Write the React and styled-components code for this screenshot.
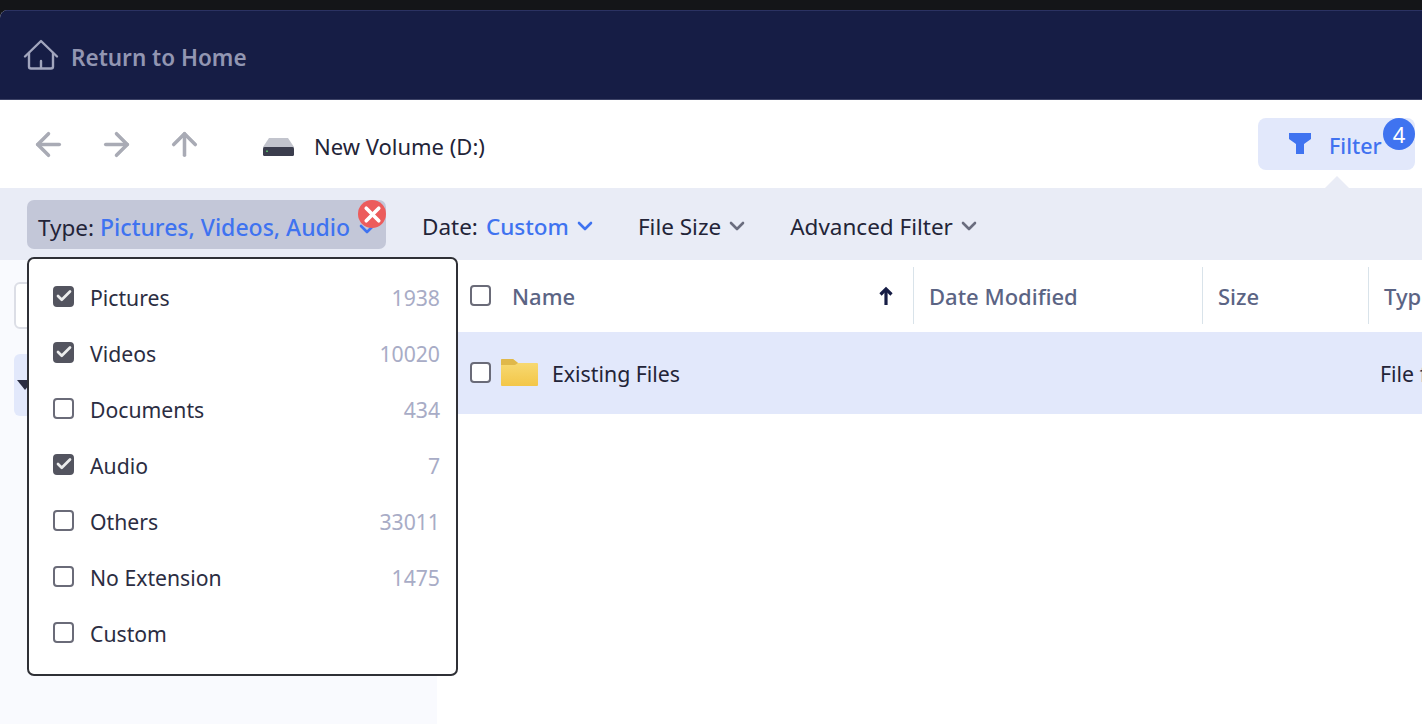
import React from 'react';
import styled, { createGlobalStyle } from 'styled-components';
import { ArrowLeft, ArrowRight, ArrowUp, ChevronDown, X, Check } from 'lucide-react';

const GlobalStyle = createGlobalStyle`
  html, body {
    margin: 0;
    padding: 0;
    height: 100%;
    overflow: hidden;
    background: #141518;
    font-family: "Noto Sans", "Open Sans", sans-serif;
  }
`;

const typeOptions = [
  { label: 'Pictures', count: '1938', checked: true },
  { label: 'Videos', count: '10020', checked: true },
  { label: 'Documents', count: '434' },
  { label: 'Audio', count: '7', checked: true },
  { label: 'Others', count: '33011' },
  { label: 'No Extension', count: '1475' },
  { label: 'Custom', count: '' },
];

const App = () => {
  return (
    <Page>
      <GlobalStyle />
      <Header>
        <HomeIcon />
        <HomeLabel>Return to Home</HomeLabel>
      </Header>

      <Toolbar>
        <NavButton><ArrowLeft size={37} strokeWidth={2.3} /></NavButton>
        <NavButton><ArrowRight size={37} strokeWidth={2.3} /></NavButton>
        <NavButton><ArrowUp size={37} strokeWidth={2.3} /></NavButton>
        <DriveIcon />
        <DriveLabel>New Volume (D:)</DriveLabel>
        <FilterButton>
          <FunnelIcon />
          Filter
          <FilterBadge>4</FilterBadge>
        </FilterButton>
      </Toolbar>

      <FilterBar>
        <TypeChip>
          <ChipText>Type:<ChipValue>Pictures, Videos, Audio</ChipValue></ChipText>
          <ChipCaret size={24} strokeWidth={2.6} color="#3f73f0" />
          <ChipClose><X size={25} strokeWidth={3.5} color="#fff" /></ChipClose>
        </TypeChip>
        <FilterItem>Date:<ItemValue>Custom</ItemValue><Caret size={24} strokeWidth={2.6} color="#3f73f0" /></FilterItem>
        <FilterItem>File Size<Caret size={24} strokeWidth={2.6} color="#6a6d7e" /></FilterItem>
        <FilterItem>Advanced Filter<Caret size={24} strokeWidth={2.6} color="#6a6d7e" /></FilterItem>
      </FilterBar>

      <Content>
        <Sidebar>
          <SearchBox />
          <TreeRow><TreeArrow /></TreeRow>
        </Sidebar>
        <Table>
          <HeadRow>
            <CheckCell><Checkbox /></CheckCell>
            <NameHead>
              Name
              <SortArrow />
            </NameHead>
            <HeadCell $width={289}>Date Modified</HeadCell>
            <HeadCell $width={166}>Size</HeadCell>
            <HeadCell $width={60}>Type</HeadCell>
          </HeadRow>
          <FileRow>
            <CheckCell><Checkbox /></CheckCell>
            <FolderIcon />
            <FileName>Existing Files</FileName>
            <FileType>File folder</FileType>
          </FileRow>
        </Table>
      </Content>

      <Popover>
        {typeOptions.map((option) => (
          <OptionRow key={option.label}>
            <Checkbox $checked={option.checked}>
              {option.checked && <Check size={18} strokeWidth={3.6} color="#eceded" />}
            </Checkbox>
            <OptionLabel>{option.label}</OptionLabel>
            <OptionCount>{option.count}</OptionCount>
          </OptionRow>
        ))}
      </Popover>
    </Page>
  );
};

const HomeIcon = () => (
  <svg width="36" height="32" viewBox="0 0 36 32" fill="none" stroke="#a1a5bd" strokeWidth="2.4" strokeLinecap="round" strokeLinejoin="round">
    <path d="M2 17.500 18 2l16 15.500" />
    <path d="M6 14v13.500a2 2 0 0 0 2 2h20a2 2 0 0 0 2-2V14" />
    <path d="M18 22v7" />
  </svg>
);

const DriveIcon = () => (
  <DriveSvg width="31" height="18" viewBox="0 0 31 18">
    <path d="M6 0h19l6 9v1H0V9z" fill="#c2c4cd" />
    <rect y="9" width="31" height="9" rx="1.500" fill="#3b3d4d" />
    <rect x="3" y="12.500" width="2" height="1.500" fill="#58b368" />
  </DriveSvg>
);

const FunnelIcon = () => (
  <FunnelSvg width="22" height="22" viewBox="0 0 22 22">
    <path d="M0 1h22v6l-7 5v10H7V12L0 7z" fill="#3f73f0" />
  </FunnelSvg>
);

const SortArrow = () => (
  <svg width="14" height="20" viewBox="0 0 14 20" fill="none" stroke="#161d45" strokeWidth="3.200">
    <path d="M7 19V3" />
    <path d="M1.500 8.500 7 3l5.500 5.500" />
  </svg>
);

const FolderIcon = () => (
  <FolderSvg width="37" height="27" viewBox="0 0 37 27">
    <defs>
      <linearGradient id="folderFill" x1="0" y1="0" x2="0" y2="1">
        <stop offset="0" stopColor="#f8dc78" />
        <stop offset="1" stopColor="#f3c648" />
      </linearGradient>
    </defs>
    <path d="M1 0h11l5 4h19a1 1 0 0 1 1 1v21a1 1 0 0 1-1 1H1a1 1 0 0 1-1-1V1a1 1 0 0 1 1-1z" fill="url(#folderFill)" />
    <path d="M1 0h11l5 4-3 2H0V1a1 1 0 0 1 1-1z" fill="#e0b84a" />
  </FolderSvg>
);

const Page = styled.div`
  position: relative;
  width: 1422px;
  height: 714px;
  margin-top: 10px;
  background: #fff;
  border-top-left-radius: 8px;
  overflow: hidden;
  display: flex;
  flex-direction: column;
  color: #2b2d42;
`;

const Header = styled.header`
  flex: 0 0 90px;
  box-sizing: border-box;
  background: #161d45;
  border-top: 1px solid #2b3262;
  border-bottom: 1px solid #3d4366;
  display: flex;
  align-items: center;
  gap: 12px;
  padding: 0 0 0 23px;
`;

const HomeLabel = styled.span`
  margin-top: 4px;
  font-size: 22.500px;
  font-weight: 600;
  color: #9296b2;
`;

const Toolbar = styled.div`
  flex: 0 0 88px;
  display: flex;
  align-items: center;
  padding: 0 7px 0 34px;
`;

const NavButton = styled.span`
  width: 29px;
  height: 29px;
  margin-right: 39px;
  display: flex;
  align-items: center;
  justify-content: center;
  color: #a9abb5;

  svg {
    flex: none;
  }
`;

const DriveSvg = styled.svg`
  flex: none;
  margin: 6px 0 0 25px;
`;

const DriveLabel = styled.span`
  margin: 3px 0 0 20px;
  font-size: 22px;
  color: #232438;
`;

const FilterButton = styled.button`
  position: relative;
  margin-left: auto;
  width: 157px;
  height: 52px;
  border: 0;
  border-radius: 8px;
  background: #e2e8fb;
  color: #4172f0;
  font: 500 21.500px "Noto Sans", sans-serif;
  display: flex;
  align-items: center;
  padding: 3px 0 0 31px;
  gap: 18px;
  box-sizing: border-box;

  &::after {
    content: '';
    position: absolute;
    right: 66px;
    bottom: -18px;
    border: 12px solid transparent;
    border-top: 0;
    border-bottom-color: #e9ecf6;
  }
`;

const FunnelSvg = styled.svg`
  flex: none;
  margin-top: -5px;
`;

const FilterBadge = styled.span`
  position: absolute;
  top: 0;
  right: 0;
  width: 32px;
  height: 32px;
  border-radius: 50%;
  background: #3f73f0;
  color: #fff;
  font-size: 22px;
  font-weight: 400;
  line-height: 32px;
  text-align: center;
`;

const FilterBar = styled.div`
  flex: 0 0 72px;
  background: #e9ecf6;
  display: flex;
  align-items: center;
  padding: 0 0 0 27px;
  gap: 46px;
`;

const TypeChip = styled.div`
  position: relative;
  width: 359px;
  height: 49px;
  margin: 1px -10px 0 0;
  box-sizing: border-box;
  padding-left: 11px;
  border-radius: 7px;
  background: #c3c7d8;
  display: flex;
  align-items: center;
  font-size: 22.500px;
  color: #232438;
`;

const ChipText = styled.span`
  margin-top: 5px;
  white-space: nowrap;
`;

const ChipValue = styled.span`
  margin-left: 6px;
  color: #3f73f0;
  font-size: 23px;
  font-weight: 500;
`;

const ChipCaret = styled(ChevronDown)`
  position: absolute;
  left: 328px;
  top: 17px;
`;

const ChipClose = styled.span`
  position: absolute;
  top: 0;
  right: 0;
  width: 28px;
  height: 28px;
  border-radius: 50%;
  background: #ec5c5c;
  display: flex;
  align-items: center;
  justify-content: center;

  svg {
    flex: none;
  }
`;

const FilterItem = styled.div`
  display: flex;
  align-items: center;
  font-size: 22.500px;
  line-height: 30px;
  color: #232438;
  margin-top: 6px;
`;

const ItemValue = styled.span`
  margin-left: 8px;
  color: #3f73f0;
  font-weight: 500;
`;

const Caret = styled(ChevronDown)`
  flex: none;
  margin: -2px -5px 0 4px;
`;

const Content = styled.div`
  flex: 1;
  display: flex;
  min-height: 0;
`;

const Sidebar = styled.aside`
  flex: 0 0 437px;
  background: #f9fafe;
  padding: 22px 0 0 14px;
  box-sizing: border-box;
`;

const SearchBox = styled.div`
  width: 60px;
  height: 47px;
  box-sizing: border-box;
  border: 2px solid #dcdee6;
  border-radius: 6px;
  background: #fff;
`;

const TreeRow = styled.div`
  width: 60px;
  height: 62px;
  margin-top: 25px;
  border-radius: 6px;
  background: #e2e8fb;
  display: flex;
  align-items: center;
  padding-left: 3px;
`;

const TreeArrow = styled.span`
  border: 8px solid transparent;
  border-top: 10px solid #2b2d42;
  border-bottom: 0;
`;

const Table = styled.section`
  flex: 1;
  min-width: 0;
  overflow: hidden;
`;

const HeadRow = styled.div`
  height: 72px;
  display: flex;
  align-items: center;
  font-size: 22px;
  font-weight: 500;
  color: #5b6484;
`;

const CheckCell = styled.div`
  flex: 0 0 75px;
  display: flex;
  justify-content: flex-end;
  padding-right: 21px;
  box-sizing: border-box;
  margin-top: -2px;
`;

const NameHead = styled.div`
  flex: 0 0 402px;
  height: 57px;
  box-sizing: border-box;
  padding: 1px 20px 0 0;
  margin-top: -2px;
  display: flex;
  align-items: center;
  justify-content: space-between;
  border-right: 1px solid #d9e3ea;
`;

const HeadCell = styled.div`
  flex: 0 0 ${(props) => props.$width}px;
  height: 57px;
  box-sizing: border-box;
  margin-top: -2px;
  padding: 1px 0 0 15px;
  display: flex;
  align-items: center;
  white-space: nowrap;
  border-right: 1px solid #d9e3ea;

  &:last-child {
    border-right: 0;
  }
`;

const FileRow = styled.div`
  height: 82px;
  display: flex;
  align-items: center;
  background: #e2e8fb;
  font-size: 21.300px;
  color: #232438;
  white-space: nowrap;
`;

const FolderSvg = styled.svg`
  flex: none;
  margin: -2px 0 0 -11px;
`;

const FileName = styled.span`
  margin-left: 14px;
`;

const FileType = styled.span`
  margin-left: 700px;
`;

const Checkbox = styled.span`
  flex: none;
  width: 21px;
  height: 21px;
  box-sizing: border-box;
  border: 2px solid ${(props) => (props.$checked ? '#53545f' : '#6a6b78')};
  border-radius: 4px;
  background: ${(props) => (props.$checked ? '#53545f' : '#fff')};
  display: flex;
  align-items: center;
  justify-content: center;

  svg {
    flex: none;
  }
`;

const Popover = styled.div`
  position: absolute;
  left: 27px;
  top: 247px;
  width: 431px;
  height: 419px;
  box-sizing: border-box;
  border: 2px solid #2f3036;
  border-radius: 7px;
  background: #fff;
  padding: 9px 16px 0 24px;
`;

const OptionRow = styled.div`
  height: 56px;
  display: flex;
  align-items: center;
  font-size: 21.200px;
  color: #2b2d42;
`;

const OptionLabel = styled.span`
  margin: 2px 0 0 16px;
`;

const OptionCount = styled.span`
  margin: 2px 0 0 auto;
  color: #a8acc6;
`;

export default App;
